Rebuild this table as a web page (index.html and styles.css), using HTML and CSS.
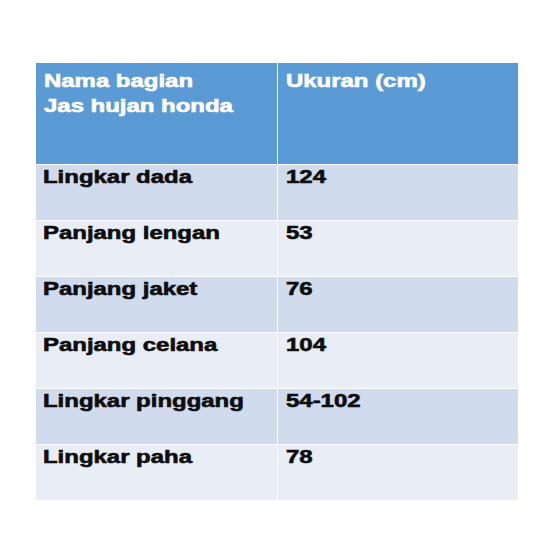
FILE: index.html
```html
<!DOCTYPE html>
<html lang="id">
<head>
<meta charset="utf-8">
<title>Ukuran Jas hujan honda</title>
<link rel="stylesheet" href="styles.css">
</head>
<body>
<div class="page">
  <div class="size-table">
    <div class="cell head first"><span class="txt">Nama bagian<br>Jas hujan honda</span></div>
    <div class="cell head second"><span class="txt">Ukuran (cm)</span></div>

    <div class="cell odd first"><span class="txt">Lingkar dada</span></div>
    <div class="cell odd second"><span class="txt">124</span></div>

    <div class="cell even first"><span class="txt">Panjang lengan</span></div>
    <div class="cell even second"><span class="txt">53</span></div>

    <div class="cell odd first"><span class="txt">Panjang jaket</span></div>
    <div class="cell odd second"><span class="txt">76</span></div>

    <div class="cell even first"><span class="txt">Panjang celana</span></div>
    <div class="cell even second"><span class="txt">104</span></div>

    <div class="cell odd first"><span class="txt">Lingkar pinggang</span></div>
    <div class="cell odd second"><span class="txt">54-102</span></div>

    <div class="cell even first"><span class="txt">Lingkar paha</span></div>
    <div class="cell even second"><span class="txt">78</span></div>
  </div>
</div>
</body>
</html>
```

FILE: styles.css
```css
html, body {
  margin: 0;
  padding: 0;
  background: #ffffff;
}

.page {
  padding: 63px 0 0 36px;
}

.size-table {
  display: grid;
  grid-template-columns: 241px 240px;
  grid-template-rows: 101px repeat(6, 55px);
  column-gap: 1px;
  row-gap: 1px;
  width: 482px;
  font-family: "Liberation Sans", Arial, sans-serif;
  font-weight: bold;
  font-size: 18px;
}

.cell {
  line-height: 21px;
  padding-top: 2px;
  color: #0d0d0d;
  overflow: hidden;
}

/* the source image is stretched horizontally */
.txt {
  display: inline-block;
  white-space: nowrap;
  transform: scaleX(1.33);
  transform-origin: 0 0;
  -webkit-text-stroke: 0.6px currentColor;
}

.cell.first {
  padding-left: 7px;
}

.cell.second {
  padding-left: 8px;
}

.head {
  background: #5b9bd5;
  color: #ffffff;
  line-height: 25px;
  padding-top: 6px;
}

.head.first {
  padding-left: 8px;
}

.head.second {
  padding-left: 8px;
}

.odd {
  background: #d0dbee;
}

.even {
  background: #e8edf6;
}
```
